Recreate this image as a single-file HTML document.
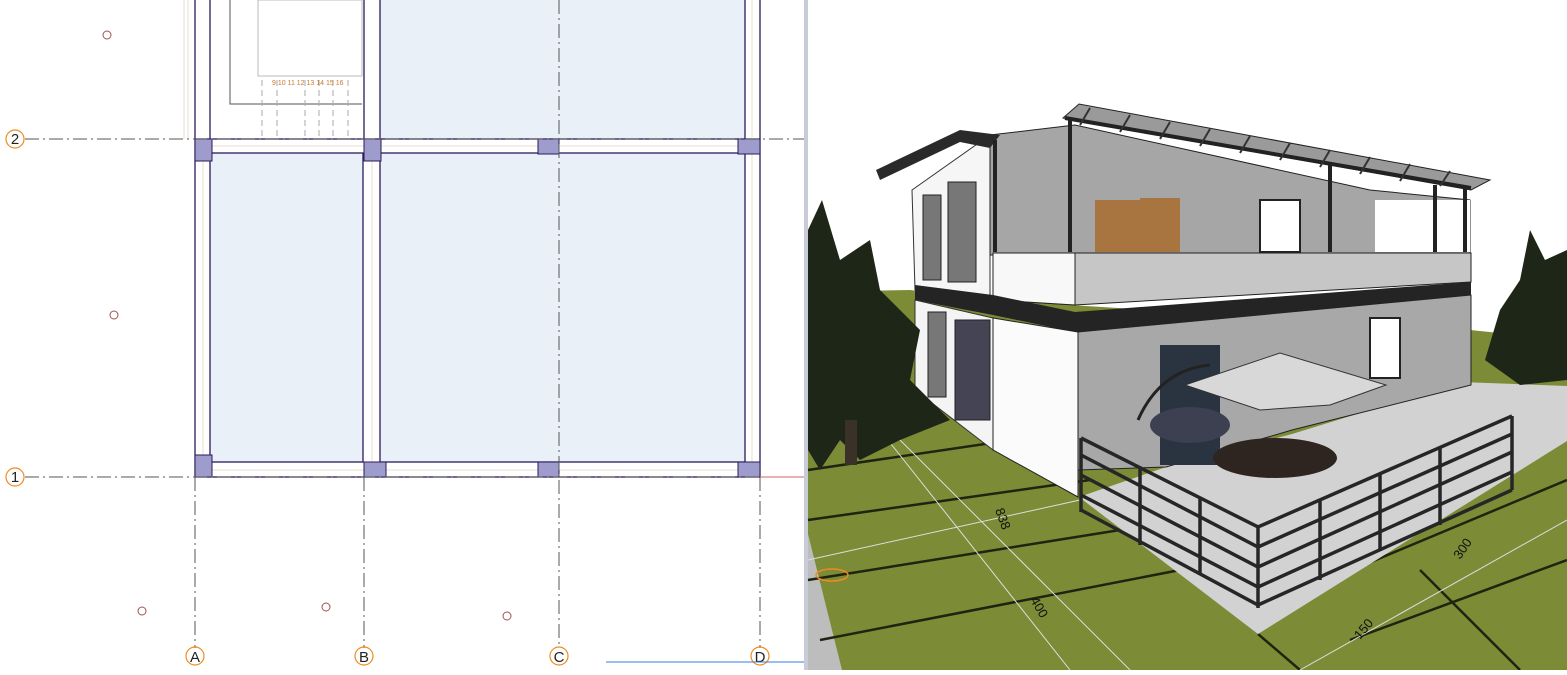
<!DOCTYPE html>
<html><head><meta charset="utf-8"><style>
body{margin:0;width:1567px;height:670px;overflow:hidden;background:#fff;font-family:"Liberation Sans",sans-serif}
</style></head><body>
<svg width="1567" height="670" viewBox="0 0 1567 670" xmlns="http://www.w3.org/2000/svg">
<rect width="1567" height="670" fill="#fff"/>
<!-- plan -->
<g>
<rect x="210" y="153" width="153" height="309" fill="#e9f0f8"/>
<rect x="380" y="153" width="365" height="309" fill="#e9f0f8"/>
<rect x="380" y="0" width="365" height="139" fill="#e9f0f8"/>
<g fill="none" stroke="#2a1a5a" stroke-width="1.3">
<rect x="195" y="139" width="565" height="338"/>
<rect x="210" y="153" width="153" height="309"/>
<rect x="380" y="153" width="365" height="309"/>
<line x1="364" y1="0" x2="364" y2="139"/><line x1="380" y1="0" x2="380" y2="139"/>
<line x1="745" y1="0" x2="745" y2="139"/><line x1="760" y1="0" x2="760" y2="139"/>
<line x1="195" y1="0" x2="195" y2="139"/><line x1="210" y1="0" x2="210" y2="139"/>
</g>
<g stroke="#e8ddd6" fill="none"><line x1="200" y1="146" x2="755" y2="146"/><line x1="200" y1="470" x2="755" y2="470"/><line x1="203" y1="145" x2="203" y2="470"/><line x1="372" y1="145" x2="372" y2="470"/><line x1="752" y1="0" x2="752" y2="470"/><line x1="184" y1="0" x2="184" y2="139"/><line x1="188" y1="0" x2="188" y2="139"/></g>
<g fill="#9e9ccc" stroke="#2a1a5a"><rect x="195" y="139" width="17" height="22"/><rect x="364" y="139" width="17" height="22"/><rect x="538" y="139" width="21" height="15"/><rect x="738" y="139" width="22" height="15"/><rect x="195" y="455" width="17" height="22"/><rect x="364" y="462" width="22" height="15"/><rect x="538" y="462" width="21" height="15"/><rect x="738" y="462" width="22" height="15"/></g>
<g stroke="#555" stroke-dasharray="14 4 2 4" fill="none">
<line x1="25" y1="139" x2="805" y2="139"/><line x1="25" y1="477" x2="805" y2="477"/>
<line x1="195" y1="477" x2="195" y2="648"/><line x1="364" y1="477" x2="364" y2="648"/><line x1="559" y1="0" x2="559" y2="648"/><line x1="760" y1="477" x2="760" y2="648"/>
</g>
<line x1="760" y1="477" x2="805" y2="477" stroke="#c66" />
<g fill="none" stroke="#555"><polyline points="230,0 230,104 362,104"/><rect x="258" y="0" width="104" height="76" stroke="#bbb"/></g>
<g stroke="#aaa" stroke-dasharray="6 4"><line x1="262" y1="80" x2="262" y2="139"/><line x1="277" y1="80" x2="277" y2="139"/><line x1="305" y1="80" x2="305" y2="139"/><line x1="319" y1="80" x2="319" y2="139"/><line x1="333" y1="80" x2="333" y2="139"/><line x1="348" y1="80" x2="348" y2="139"/></g>
<text x="272" y="85" font-size="7" fill="#c87a30">9 10 11 12 13 14 15 16</text>
<g fill="none" stroke="#f08a20" stroke-width="1.2"><circle cx="15" cy="139" r="9"/><circle cx="15" cy="477" r="9"/><circle cx="195" cy="656" r="9"/><circle cx="364" cy="656" r="9"/><circle cx="559" cy="656" r="9"/><circle cx="760" cy="656" r="9"/></g>
<g font-size="15" fill="#222" text-anchor="middle"><text x="15" y="144">2</text><text x="15" y="482">1</text><text x="195" y="662">A</text><text x="364" y="662">B</text><text x="559" y="662">C</text><text x="760" y="662">D</text></g>
<g fill="none" stroke="#a05050"><circle cx="107" cy="35" r="4"/><circle cx="114" cy="315" r="4"/><circle cx="142" cy="611" r="4"/><circle cx="326" cy="607" r="4"/><circle cx="507" cy="616" r="4"/></g>
<line x1="606" y1="662" x2="805" y2="662" stroke="#3b7dd8"/>
</g>
<!-- divider -->
<rect x="804" y="0" width="4" height="670" fill="#c8ccd8"/>
<!-- 3D -->
<g>
<rect x="808" y="0" width="759" height="670" fill="#fff"/>
<polygon points="808,292 910,290 990,300 1470,330 1567,340 1567,670 808,670" fill="#7c8b36"/>
<polygon points="808,534 842,670 808,670" fill="#bdbdbd"/>
<g stroke="#1e2410" stroke-width="2.5" fill="none">
<line x1="808" y1="470" x2="1080" y2="430"/><line x1="808" y1="520" x2="1090" y2="480"/><line x1="808" y1="580" x2="1120" y2="530"/><line x1="820" y1="640" x2="1180" y2="570"/>
<line x1="1280" y1="600" x2="1567" y2="480"/><line x1="1350" y1="640" x2="1567" y2="560"/>
<line x1="1258" y1="634" x2="1300" y2="670"/><line x1="1420" y1="570" x2="1520" y2="670"/>
</g>
<g stroke="#ddd" stroke-width="1" fill="none"><line x1="880" y1="430" x2="1070" y2="670"/><line x1="900" y1="440" x2="1130" y2="670"/><line x1="808" y1="560" x2="1080" y2="500"/><line x1="1300" y1="670" x2="1567" y2="520"/></g>
<g font-size="13" fill="#111"><text x="1030" y="600" transform="rotate(60 1030 600)">400</text><text x="1360" y="640" transform="rotate(-50 1360 640)">150</text><text x="1460" y="560" transform="rotate(-55 1460 560)">300</text><text x="995" y="510" transform="rotate(70 995 510)">838</text></g>
<ellipse cx="832" cy="575" rx="16" ry="6" fill="none" stroke="#f08a20" stroke-width="1.5"/>
<!-- terrace slab -->
<polygon points="1079,497 1258,634 1567,441 1567,386 1461,382 1292,434 1166,467" fill="#d2d2d2"/>
<!-- house -->
<polygon points="912,190 990,135 990,300 915,290" fill="#f6f6f6" stroke="#333"/>
<polygon points="990,135 1075,125 1370,190 1470,200 1470,255 990,255" fill="#a6a6a6" stroke="#222"/>
<polygon points="993,253 1471,253 1471,282 1075,305 993,300" fill="#c6c6c6" stroke="#222"/>
<polygon points="993,253 1075,253 1075,305 993,300" fill="#f8f8f8" stroke="#222"/>
<polygon points="915,285 993,295 1075,312 1471,282 1471,295 1075,332 993,315 915,300" fill="#242424"/>
<polygon points="915,300 993,318 993,450 915,390" fill="#f4f4f4" stroke="#333"/>
<polygon points="993,318 1078,332 1078,497 993,450" fill="#fbfbfb" stroke="#222"/>
<polygon points="1078,332 1471,295 1471,385 1292,430 1166,467 1078,470" fill="#a8a8a8" stroke="#222"/>
<rect x="1160" y="345" width="60" height="120" fill="#2a3440"/>
<rect x="923" y="195" width="18" height="85" fill="#777" stroke="#222"/><rect x="948" y="182" width="28" height="100" fill="#777" stroke="#222"/>
<rect x="928" y="312" width="18" height="85" fill="#777" stroke="#222"/><rect x="955" y="320" width="35" height="100" fill="#445" stroke="#222"/>
<rect x="1095" y="200" width="45" height="52" fill="#a87440"/><rect x="1140" y="198" width="40" height="54" fill="#a87440"/>
<rect x="1260" y="200" width="40" height="52" fill="#fff" stroke="#222" stroke-width="2"/>
<rect x="1370" y="318" width="30" height="60" fill="#fff" stroke="#222" stroke-width="2"/>
<rect x="1375" y="200" width="95" height="52" fill="#fff"/>
<!-- pergola -->
<polygon points="876,170 960,130 1000,135 990,148 960,142 880,180" fill="#2a2a2a"/>
<polygon points="1063,118 1079,104 1490,180 1471,190" fill="#9a9a9a" stroke="#222"/>
<g stroke="#222" stroke-width="4"><line x1="1065" y1="118" x2="1471" y2="188"/><line x1="1070" y1="120" x2="1070" y2="252"/><line x1="1330" y1="165" x2="1330" y2="252"/><line x1="1435" y1="185" x2="1435" y2="252"/><line x1="1465" y1="188" x2="1465" y2="252"/><line x1="995" y1="140" x2="995" y2="252"/></g>
<g stroke="#333" stroke-width="2"><line x1="1090" y1="108" x2="1080" y2="125"/><line x1="1130" y1="115" x2="1120" y2="132"/><line x1="1170" y1="122" x2="1160" y2="139"/><line x1="1210" y1="129" x2="1200" y2="146"/><line x1="1250" y1="136" x2="1240" y2="153"/><line x1="1290" y1="143" x2="1280" y2="160"/><line x1="1330" y1="150" x2="1320" y2="167"/><line x1="1370" y1="157" x2="1360" y2="174"/><line x1="1410" y1="164" x2="1400" y2="181"/><line x1="1450" y1="171" x2="1440" y2="186"/></g>
<!-- umbrella -->
<polygon points="1185,385 1280,353 1386,385 1330,405 1260,410" fill="#d8d8d8" stroke="#333"/>
<path d="M1138,420 Q1160,370 1210,365" stroke="#222" stroke-width="3" fill="none"/>
<ellipse cx="1190" cy="425" rx="40" ry="18" fill="#3c4050"/>
<ellipse cx="1275" cy="458" rx="62" ry="20" fill="#2e2420"/>
<!-- railing -->
<g stroke="#262626" stroke-width="3.5" fill="none">
<polyline points="1081,438 1258,527 1512,416"/><polyline points="1081,455 1258,547 1512,434"/><polyline points="1081,475 1258,567 1512,452"/><polyline points="1081,495 1258,587 1512,472"/><polyline points="1081,510 1258,605 1512,490"/>
<line x1="1081" y1="438" x2="1081" y2="512"/><line x1="1140" y1="468" x2="1140" y2="545"/><line x1="1200" y1="497" x2="1200" y2="575"/><line x1="1258" y1="527" x2="1258" y2="608"/><line x1="1320" y1="500" x2="1320" y2="580"/><line x1="1380" y1="474" x2="1380" y2="550"/><line x1="1440" y1="448" x2="1440" y2="525"/><line x1="1512" y1="416" x2="1512" y2="490"/>
</g>
<!-- trees -->
<polygon points="808,230 822,200 840,260 870,240 880,290 920,330 910,380 950,420 900,440 860,460 840,440 820,470 808,450" fill="#1e2618"/>
<rect x="845" y="420" width="12" height="45" fill="#3a3228"/>
<polygon points="1530,230 1545,260 1567,250 1567,380 1520,385 1485,360 1500,310 1520,280" fill="#1e2618"/>
</g>
</svg>
</body></html>
